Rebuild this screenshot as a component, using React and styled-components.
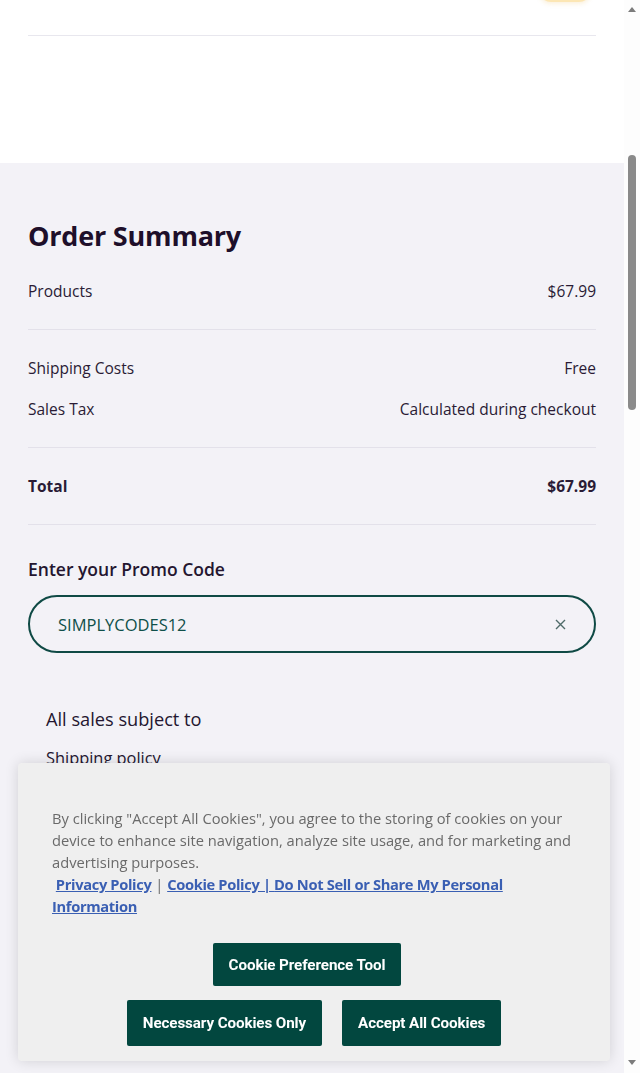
import { useLayoutEffect, useRef } from 'react';
import styled, { createGlobalStyle } from 'styled-components';

const GlobalStyle = createGlobalStyle`
    html, body {
        margin: 0;
        padding: 0;
        overflow: hidden;
    }

    * {
        box-sizing: border-box;
    }
`;

const Page = styled.div`
    display: flex;
    height: 100vh;
    background-color: #ffffff;
`;

const Scroller = styled.div`
    flex: 1;
    min-width: 0;
    overflow: hidden;
    font-family: "Open Sans", "Liberation Sans", sans-serif;
    color: #241630;
`;

const Rail = styled.div`
    width: 16px;
    flex-shrink: 0;
    display: flex;
    flex-direction: column;
    align-items: center;
    background-color: #fdfdfd;
`;

const Arrow = styled.span`
    display: block;
    flex-shrink: 0;
    width: 0;
    height: 0;
    margin: ${(p) => (p.$down ? 'auto 0 8px' : '7px 0 0')};
    border-left: 4px solid transparent;
    border-right: 4px solid transparent;
    ${(p) => (p.$down ? 'border-top: 5px solid #7c7c7c;' : 'border-bottom: 5px solid #7c7c7c;')}
`;

const Thumb = styled.span`
    display: block;
    width: 8px;
    height: 255px;
    margin-top: 143px;
    border-radius: 4px;
    background-color: #8a8a8a;
`;

const CartSection = styled.section`
    padding: 0 28px 127px;
`;

const CartItem = styled.div`
    min-height: 616px;
    display: flex;
    flex-direction: column;
    justify-content: flex-end;
    align-items: flex-end;
    padding-bottom: 33px;
    border-bottom: 1px solid #e8e7ee;
`;

const StockPill = styled.span`
    display: block;
    width: 52px;
    height: 24px;
    margin-right: 5px;
    border-radius: 12px;
    background-color: #fce6b4;
    box-shadow: 0 2px 4px rgba(240, 200, 120, 0.25);
`;

const Summary = styled.section`
    background-color: #f3f2f7;
    padding: 55px 28px 0;
`;

const Heading = styled.h2`
    margin: 0 0 26px;
    font-size: 27px;
    line-height: 36px;
    font-weight: 700;
    color: #1e0f2a;
    letter-spacing: -0.2px;
`;

const Group = styled.div`
    display: flex;
    flex-direction: column;
    gap: 19px;
    padding: ${(p) => (p.$first ? '0 0 27px' : '27px 0')};
    border-bottom: 1px solid #e3e1ea;
`;

const Row = styled.div`
    display: flex;
    justify-content: space-between;
    font-size: 15.5px;
    line-height: 22px;
    font-weight: ${(p) => (p.$bold ? 700 : 400)};
    color: #2a1b35;
`;

const PromoLabel = styled.label`
    display: block;
    margin: 33px 0 15px;
    font-size: 17.5px;
    line-height: 22px;
    font-weight: 600;
    color: #241630;
`;

const PromoField = styled.div`
    display: flex;
    align-items: center;
    height: 58px;
    padding: 0 28px;
    border: 2px solid #0f4a45;
    border-radius: 29px;
`;

const PromoInput = styled.input`
    flex: 1;
    min-width: 0;
    border: none;
    outline: none;
    background: transparent;
    font-family: inherit;
    font-size: 16.5px;
    color: #0f4f49;
    padding: 0;
`;

const ClearButton = styled.button`
    display: flex;
    border: none;
    background: none;
    padding: 0;
    color: #4f6b69;
`;

const Policies = styled.div`
    padding: 55px 18px 480px;
    display: flex;
    flex-direction: column;
    gap: 17px;
`;

const PolicyText = styled.p`
    margin: 0;
    font-size: ${(p) => (p.$small ? '16.4px' : '18.2px')};
    line-height: 22px;
    color: #241630;
`;

const Footer = styled.footer`
    min-height: 1400px;
    background-color: #ffffff;
`;

const Banner = styled.div`
    position: fixed;
    left: 18px;
    right: 30px;
    bottom: 12px;
    padding: 44px 34px 15px;
    background-color: #efefef;
    border-radius: 4px;
    box-shadow: 0 0 14px rgba(0, 0, 0, 0.14);
    font-family: "Open Sans", "Liberation Sans", sans-serif;
`;

const BannerText = styled.p`
    margin: 0;
    font-size: 14.7px;
    line-height: 22px;
    color: #6a6a6a;
`;

const BannerLink = styled.a`
    color: #3a5fb3;
    font-weight: 700;
    letter-spacing: -0.35px;
    text-decoration: underline;
`;

const ButtonRow = styled.div`
    display: flex;
    justify-content: center;
    gap: 20px;
    margin-top: ${(p) => p.$gap};
    padding-right: ${(p) => (p.$offset ? '14px' : '0')};
`;

const BannerButton = styled.button`
    height: ${(p) => (p.$tall ? '46px' : '43px')};
    padding: 0 16px;
    border: none;
    border-radius: 2px;
    background-color: #02473f;
    color: #ffffff;
    font-family: Roboto, "Liberation Sans", sans-serif;
    font-size: 15.2px;
    font-weight: 700;
    letter-spacing: -0.1px;
`;

function App() {
    const scrollRef = useRef(null);
    const summaryRef = useRef(null);

    useLayoutEffect(() => {
        scrollRef.current.scrollTop = summaryRef.current.offsetTop - 163;
    }, []);

    return (
        <>
            <GlobalStyle />
            <Page>
                <Scroller ref={scrollRef}>
                    <CartSection>
                        <CartItem>
                            <StockPill />
                        </CartItem>
                    </CartSection>
                    <Summary ref={summaryRef}>
                        <Heading>Order Summary</Heading>
                        <Group $first>
                            <Row><span>Products</span><span>$67.99</span></Row>
                        </Group>
                        <Group>
                            <Row><span>Shipping Costs</span><span>Free</span></Row>
                            <Row><span>Sales Tax</span><span>Calculated during checkout</span></Row>
                        </Group>
                        <Group>
                            <Row $bold><span>Total</span><span>$67.99</span></Row>
                        </Group>
                        <PromoLabel htmlFor="promo">Enter your Promo Code</PromoLabel>
                        <PromoField>
                            <PromoInput id="promo" defaultValue="SIMPLYCODES12" />
                            <ClearButton aria-label="Clear promo code">
                                <svg width="11" height="11" viewBox="0 0 11 11" fill="none" stroke="currentColor" strokeWidth="1.4">
                                    <path d="M1 1l9 9M10 1l-9 9" />
                                </svg>
                            </ClearButton>
                        </PromoField>
                        <Policies>
                            <PolicyText>All sales subject to</PolicyText>
                            <PolicyText $small>Shipping policy</PolicyText>
                            <PolicyText $small>Return policy</PolicyText>
                            <PolicyText $small>Terms of service</PolicyText>
                        </Policies>
                    </Summary>
                    <Footer />
                </Scroller>
                <Rail>
                    <Arrow />
                    <Thumb />
                    <Arrow $down />
                </Rail>
            </Page>
            <Banner>
                <BannerText>
                    By clicking "Accept All Cookies", you agree to the storing of cookies on your device to enhance site navigation, analyze site usage, and for marketing and advertising purposes.
                    <br />
                    {'\u00a0'}<BannerLink href="#">Privacy Policy</BannerLink> | <BannerLink href="#">Cookie Policy | </BannerLink>{' '}
                    <BannerLink href="#">Do Not Sell or Share My Personal Information</BannerLink>
                </BannerText>
                <ButtonRow $gap="26px" $offset>
                    <BannerButton>Cookie Preference Tool</BannerButton>
                </ButtonRow>
                <ButtonRow $gap="14px">
                    <BannerButton $tall>Necessary Cookies Only</BannerButton>
                    <BannerButton $tall>Accept All Cookies</BannerButton>
                </ButtonRow>
            </Banner>
        </>
    );
}

export default App;
